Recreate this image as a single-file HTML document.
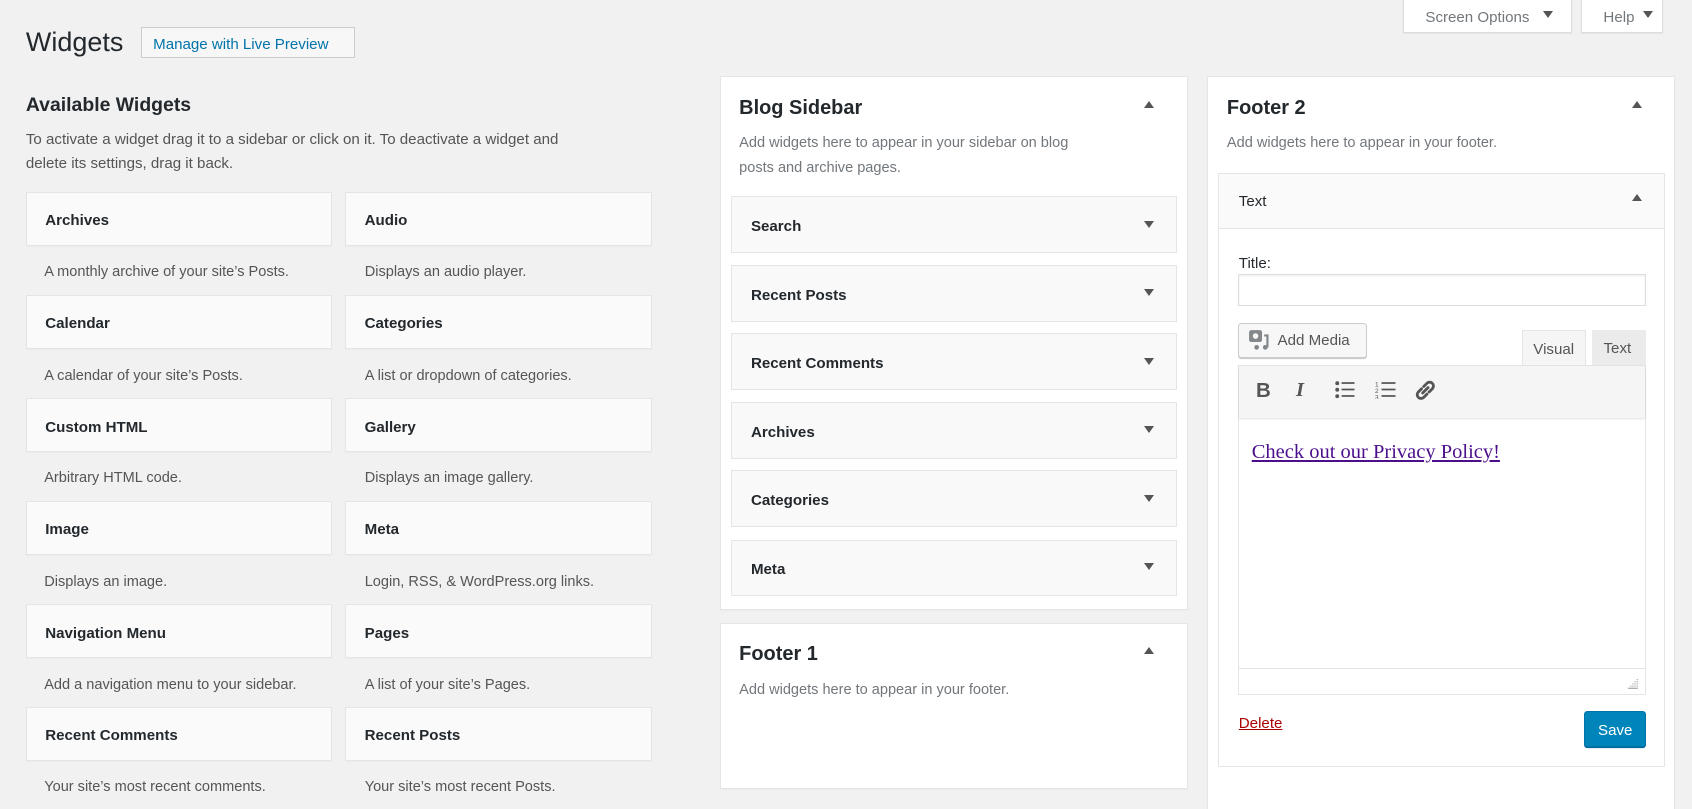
<!DOCTYPE html>
<html><head><meta charset="utf-8"><style>
html,body{margin:0;padding:0;background:#f1f1f1;overflow:hidden;width:1692px;height:809px}
#w{zoom:1.07908;position:relative;width:1568px;height:750px;font-family:"Liberation Sans",sans-serif;color:#23282d}
.a{position:absolute}
.tb{background:#fff;box-shadow:0 1px 1px rgba(0,0,0,.08);border:1px solid #ddd;border-top:0;font-size:14px;color:#72777c;box-sizing:border-box;padding-top:8px}
.card{position:absolute;width:284px;height:50px;background:#fafafa;border:1px solid #e5e5e5;box-sizing:border-box;box-shadow:0 1px 1px rgba(0,0,0,.04);font-size:14px;font-weight:bold;padding:18px 0 0 17px}
.desc{position:absolute;font-size:13.5px;color:#555}
.panel{position:absolute;background:#fff;border:1px solid #e5e5e5;box-sizing:border-box;box-shadow:0 1px 1px rgba(0,0,0,.04)}
.ph{position:absolute;font-size:18.5px;font-weight:bold;color:#23282d}
.pd{position:absolute;font-size:13.5px;color:#72777c;line-height:24px}
.iw{position:absolute;left:677px;width:414px;height:52px;background:#f9f9f9;border:1px solid #e5e5e5;box-sizing:border-box;font-size:14px;font-weight:bold;padding:19px 0 0 18px}
.dn,.up{position:absolute;width:0;height:0;border-left:5px solid transparent;border-right:5px solid transparent}
.dn{border-top:7px solid #555}
.up{border-bottom:7px solid #555}
</style></head><body><div id="w">
<div class="a tb" style="left:1300px;top:0;width:157px;height:31px;padding-left:20px">Screen Options</div><div class="dn" style="left:1430px;top:10px"></div>
<div class="a tb" style="left:1465px;top:0;width:76px;height:31px;padding-left:20px">Help</div><div class="dn" style="left:1523px;top:10px"></div>
<div class="a" style="left:24px;top:25px;font-size:25px;color:#23282d">Widgets</div>
<div class="a" style="left:131px;top:25px;width:198px;height:29px;box-sizing:border-box;border:1px solid #ccc;background:#f7f7f7;color:#0073aa;font-size:14px;padding:7px 0 0 10px">Manage with Live Preview</div>
<div class="a" style="left:24px;top:87px;font-size:18px;font-weight:bold">Available Widgets</div>
<div class="a" style="left:24px;top:119px;font-size:14px;color:#555;line-height:22px">To activate a widget drag it to a sidebar or click on it. To deactivate a widget and<br>delete its settings, drag it back.</div>

<div class="card" style="left:24px;top:178px">Archives</div><div class="desc" style="left:41px;top:245px">A monthly archive of your site’s Posts.</div>
<div class="card" style="left:320px;top:178px">Audio</div><div class="desc" style="left:338px;top:245px">Displays an audio player.</div>
<div class="card" style="left:24px;top:273px">Calendar</div><div class="desc" style="left:41px;top:341px">A calendar of your site’s Posts.</div>
<div class="card" style="left:320px;top:273px">Categories</div><div class="desc" style="left:338px;top:341px">A list or dropdown of categories.</div>
<div class="card" style="left:24px;top:369px">Custom HTML</div><div class="desc" style="left:41px;top:436px">Arbitrary HTML code.</div>
<div class="card" style="left:320px;top:369px">Gallery</div><div class="desc" style="left:338px;top:436px">Displays an image gallery.</div>
<div class="card" style="left:24px;top:464px">Image</div><div class="desc" style="left:41px;top:532px">Displays an image.</div>
<div class="card" style="left:320px;top:464px">Meta</div><div class="desc" style="left:338px;top:532px">Login, RSS, &amp; WordPress.org links.</div>
<div class="card" style="left:24px;top:560px">Navigation Menu</div><div class="desc" style="left:41px;top:627px">Add a navigation menu to your sidebar.</div>
<div class="card" style="left:320px;top:560px">Pages</div><div class="desc" style="left:338px;top:627px">A list of your site’s Pages.</div>
<div class="card" style="left:24px;top:655px">Recent Comments</div><div class="desc" style="left:41px;top:722px">Your site’s most recent comments.</div>
<div class="card" style="left:320px;top:655px">Recent Posts</div><div class="desc" style="left:338px;top:722px">Your site’s most recent Posts.</div>

<div class="panel" style="left:667px;top:70px;width:434px;height:495px"></div>
<div class="ph" style="left:685px;top:90px">Blog Sidebar</div><div class="up" style="left:1060px;top:94px"></div>
<div class="pd" style="left:685px;top:121px">Add widgets here to appear in your sidebar on blog<br>posts and archive pages.</div>
<div class="iw" style="top:182px">Search</div><div class="dn" style="left:1060px;top:205px"></div>
<div class="iw" style="top:246px">Recent Posts</div><div class="dn" style="left:1060px;top:268px"></div>
<div class="iw" style="top:309px">Recent Comments</div><div class="dn" style="left:1060px;top:332px"></div>
<div class="iw" style="top:373px">Archives</div><div class="dn" style="left:1060px;top:395px"></div>
<div class="iw" style="top:436px">Categories</div><div class="dn" style="left:1060px;top:459px"></div>
<div class="iw" style="top:500px">Meta</div><div class="dn" style="left:1060px;top:522px"></div>

<div class="panel" style="left:667px;top:577px;width:434px;height:154px"></div>
<div class="ph" style="left:685px;top:596px">Footer 1</div><div class="up" style="left:1060px;top:600px"></div>
<div class="pd" style="left:685px;top:628px">Add widgets here to appear in your footer.</div>

<div class="panel" style="left:1119px;top:70px;width:433px;height:700px"></div>
<div class="ph" style="left:1137px;top:90px">Footer 2</div><div class="up" style="left:1512px;top:94px"></div>
<div class="pd" style="left:1137px;top:121px">Add widgets here to appear in your footer.</div>
<div class="a" style="left:1129px;top:160px;width:414px;height:551px;border:1px solid #e5e5e5;box-sizing:border-box;background:#fff"></div>
<div class="a" style="left:1130px;top:161px;width:412px;height:50px;background:#fafafa;border-bottom:1px solid #e5e5e5"></div>
<div class="a" style="left:1148px;top:179px;font-size:14px">Text</div><div class="up" style="left:1512px;top:180px"></div>
<div class="a" style="left:1148px;top:236px;font-size:14px;color:#23282d">Title:</div>
<div class="a" style="left:1147px;top:254px;width:378px;height:30px;border:1px solid #ddd;box-sizing:border-box;box-shadow:inset 0 1px 2px rgba(0,0,0,.07)"></div>
<div class="a" style="left:1147px;top:299px;width:120px;height:33px;border:1px solid #ccc;border-radius:3px;box-sizing:border-box;background:#f7f7f7;box-shadow:0 1px 0 #ccc;font-size:14px;color:#555;padding:8px 0 0 36px">Add Media</div>
<svg class="a" style="left:1157px;top:305px" width="22" height="20" viewBox="0 0 22 20"><rect x="1" y="1" width="12" height="11" rx="2" fill="#82878c"/><circle cx="7" cy="6.5" r="2.6" fill="#f7f7f7"/><path d="M15 6h3v11" stroke="#82878c" stroke-width="2" fill="none"/><circle cx="16" cy="17" r="2.2" fill="#82878c"/><circle cx="8" cy="17" r="2.2" fill="#82878c"/></svg>
<div class="a" style="left:1410px;top:306px;width:60px;height:33px;background:#f5f5f5;border:1px solid #e5e5e5;border-bottom:0;box-sizing:border-box;font-size:14px;color:#555;padding:9px 0 0 10px">Visual</div>
<div class="a" style="left:1475px;top:306px;width:50px;height:32px;background:#ebebeb;box-sizing:border-box;font-size:14px;color:#555;padding:9px 0 0 11px">Text</div>
<div class="a" style="left:1147px;top:338px;width:378px;height:306px;border:1px solid #e5e5e5;box-sizing:border-box;background:#fff"></div>
<div class="a" style="left:1148px;top:339px;width:376px;height:48px;background:#f5f5f5;box-shadow:0 1px 2px rgba(0,0,0,.15)"></div>
<div class="a" style="left:1164px;top:351px;font-size:19px;font-weight:bold;color:#555">B</div>
<div class="a" style="left:1201px;top:351px;font-size:19px;font-style:italic;font-family:'Liberation Serif',serif;font-weight:bold;color:#555">I</div>
<svg class="a" style="left:1236px;top:352px" width="20" height="18"><g fill="#555"><circle cx="3" cy="3" r="1.8"/><circle cx="3" cy="9" r="1.8"/><circle cx="3" cy="15" r="1.8"/><rect x="7" y="2" width="12" height="1.6"/><rect x="7" y="8" width="12" height="1.6"/><rect x="7" y="14" width="12" height="1.6"/></g></svg>
<svg class="a" style="left:1274px;top:352px" width="20" height="18"><g fill="#555"><text x="0" y="6" font-size="6" font-family="Liberation Sans">1</text><text x="0" y="12" font-size="6" font-family="Liberation Sans">2</text><text x="0" y="18" font-size="6" font-family="Liberation Sans">3</text><rect x="6" y="2" width="13" height="1.6"/><rect x="6" y="8" width="13" height="1.6"/><rect x="6" y="14" width="13" height="1.6"/></g></svg>
<svg class="a" style="left:1310px;top:351px" width="21" height="21" viewBox="0 0 21 21"><g fill="none" stroke="#555" stroke-width="2.6" stroke-linecap="round"><path d="M9 7l3-3a3.5 3.5 0 015 5l-3 3"/><path d="M12 14l-3 3a3.5 3.5 0 01-5-5l3-3"/><path d="M8 13l5-5"/></g></svg>
<div class="a" style="left:1160px;top:409px;font-family:'Liberation Serif',serif;font-size:19px;color:#4b0f8c;text-decoration:underline">Check out our Privacy Policy!</div>
<div class="a" style="left:1148px;top:619px;width:376px;height:1px;background:#e5e5e5"></div>
<svg class="a" style="left:1508px;top:628px" width="12" height="12"><g fill="#999"><rect x="9" y="1" width="1" height="1"/><rect x="7" y="3" width="1" height="1"/><rect x="9" y="3" width="1" height="1"/><rect x="5" y="5" width="1" height="1"/><rect x="7" y="5" width="1" height="1"/><rect x="9" y="5" width="1" height="1"/><rect x="3" y="7" width="1" height="1"/><rect x="5" y="7" width="1" height="1"/><rect x="7" y="7" width="1" height="1"/><rect x="9" y="7" width="1" height="1"/><rect x="1" y="9" width="9" height="1"/></g></svg>
<div class="a" style="left:1148px;top:663px;font-size:14px;color:#a00;text-decoration:underline">Delete</div>
<div class="a" style="left:1468px;top:659px;width:57px;height:33px;background:#0085ba;border:1px solid #0073aa;border-radius:3px;box-sizing:border-box;box-shadow:0 1px 0 #006799;color:#fff;font-size:14px;padding:9px 0 0 12px">Save</div>
</div></body></html>
